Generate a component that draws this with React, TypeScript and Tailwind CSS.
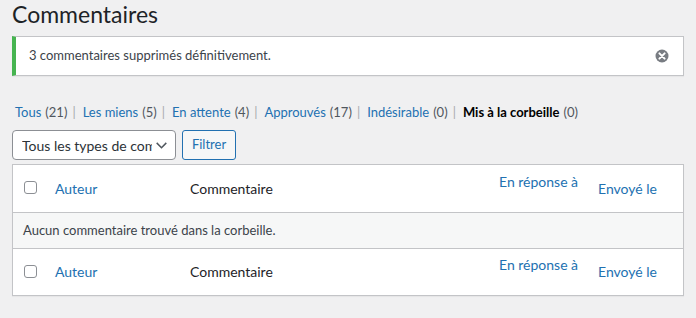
import React from "react";

const font = { fontFamily: 'Lato, "Open Sans", sans-serif' };

function Checkbox() {
  return <span className="block w-[13px] h-[13px] rounded-[3px] border border-[#8c8f94] bg-white -translate-y-[1px]" />;
}

function HeaderRow({ h }: { h: string }) {
  return (
    <div className={`grid grid-cols-[42px_135px_309px_99px_1fr] items-center ${h} text-[14px] leading-[20px]`}>
      <div className="pl-[11px] flex items-center">
        <Checkbox />
      </div>
      <div className="text-[#2271b1]">Auteur</div>
      <div className="text-[#1d2327]">Commentaire</div>
      <div className="text-[#2271b1] -translate-y-[7px]">En réponse à</div>
      <div className="text-[#2271b1]">Envoyé le</div>
    </div>
  );
}

export default function App() {
  const links: [string, string][] = [
    ["Tous", "(21)"],
    ["Les miens", "(5)"],
    ["En attente", "(4)"],
    ["Approuvés", "(17)"],
    ["Indésirable", "(0)"],
  ];
  return (
    <div className="w-[696px] h-[318px] bg-[#f0f0f1] pl-[12px] pr-[12px] overflow-hidden text-[#3c434a]" style={font}>
      <h1 className="m-0 h-[28px] leading-[28px] text-[23px] font-normal text-[#1d2327]">Commentaires</h1>
      <div className="mt-[8px] h-[40px] bg-white border border-[#c3c4c7] border-l-4 border-l-[#46b450] shadow-[0_1px_1px_rgba(0,0,0,0.04)] flex items-center justify-between pl-[13px] pr-[14px]">
        <span className="text-[13px] text-[#3c434a]">3 commentaires supprimés définitivement.</span>
        <svg width="14" height="14" viewBox="0 0 14 14">
          <circle cx="7" cy="7" r="6.5" fill="#787c82" />
          <path d="M4.4 4.4 L9.6 9.6 M9.6 4.4 L4.4 9.6" stroke="#fff" strokeWidth="2" strokeLinecap="round" />
        </svg>
      </div>
      <div className="mt-[26px] h-[20px] leading-[20px] text-[13px] flex items-center pl-[3px] whitespace-nowrap">
        {links.map(([l, c]) => (
          <span key={l} className="flex items-center">
            <span className="text-[#2271b1]">{l}</span>
            <span className="text-[#50575e] ml-[4px]">{c}</span>
            <span className="text-[#a7aaad] ml-[5px] mr-[7px]">|</span>
          </span>
        ))}
        <span className="font-bold text-black">Mis à la corbeille</span>
        <span className="text-[#50575e] ml-[4px]">(0)</span>
      </div>
      <div className="mt-[8px] flex gap-[6px] h-[30px]">
        <div className="w-[164px] h-[30px] rounded-[4px] border border-[#8c8f94] bg-white flex items-center pl-[9px] pr-[8px] text-[14px] text-[#2c3338]">
          <span className="flex-1 overflow-hidden whitespace-nowrap">Tous les types de commentaires</span>
          <svg width="11" height="7" viewBox="0 0 11 7" className="ml-[4px] shrink-0">
            <path d="M0.7 0.9 L5.5 5.7 L10.3 0.9" fill="none" stroke="#50575e" strokeWidth="1.5" />
          </svg>
        </div>
        <div className="w-[54px] h-[30px] rounded-[3px] border border-[#2271b1] bg-[#f6f7f7] text-[#2271b1] text-[13px] flex items-center justify-center">
          Filtrer
        </div>
      </div>
      <div className="mt-[4px] bg-white border border-[#c3c4c7] shadow-[0_1px_1px_rgba(0,0,0,0.04)]">
        <HeaderRow h="h-[47px]" />
        <div className="h-[37px] border-t border-b border-[#c3c4c7] bg-[#f6f7f7] flex items-center pl-[10px] text-[13px] text-[#3c434a]">
          Aucun commentaire trouvé dans la corbeille.
        </div>
        <HeaderRow h="h-[46px]" />
      </div>
    </div>
  );
}
